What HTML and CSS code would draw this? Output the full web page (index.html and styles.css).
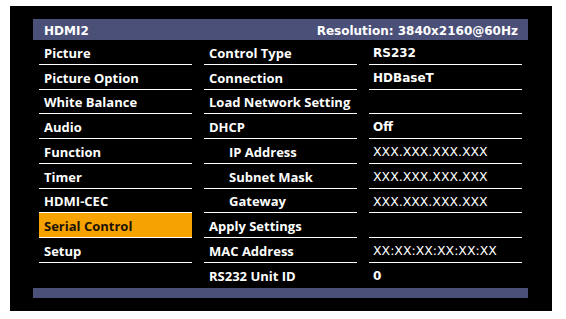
FILE: index.html
```html
<!DOCTYPE html>
<html lang="en">
<head>
    <meta charset="UTF-8">
    <meta name="viewport" content="width=device-width, initial-scale=1.0">
    <title>HDMI2 - Serial Control</title>
    <link rel="stylesheet" href="styles.css">
</head>
<body>
    <div class="screen">
        <div class="titlebar">
            <span>HDMI2</span>
            <span>Resolution: 3840x2160@60Hz</span>
        </div>

        <div class="menu">
            <div class="col">
                <div class="row">Picture</div>
                <div class="row">Picture Option</div>
                <div class="row">White Balance</div>
                <div class="row">Audio</div>
                <div class="row">Function</div>
                <div class="row">Timer</div>
                <div class="row">HDMI-CEC</div>
                <div class="row active">Serial Control</div>
                <div class="row">Setup</div>
            </div>

            <div class="col">
                <div class="row">Control Type</div>
                <div class="row">Connection</div>
                <div class="row">Load Network Setting</div>
                <div class="row">DHCP</div>
                <div class="row sub">IP Address</div>
                <div class="row sub">Subnet Mask</div>
                <div class="row sub">Gateway</div>
                <div class="row">Apply Settings</div>
                <div class="row">MAC Address</div>
                <div class="row last">RS232 Unit ID</div>
            </div>

            <div class="col values">
                <div class="row strong">RS232</div>
                <div class="row strong">HDBaseT</div>
                <div class="row"></div>
                <div class="row strong">Off</div>
                <div class="row">XXX.XXX.XXX.XXX</div>
                <div class="row">XXX.XXX.XXX.XXX</div>
                <div class="row">XXX.XXX.XXX.XXX</div>
                <div class="row"></div>
                <div class="row">XX:XX:XX:XX:XX:XX</div>
                <div class="row strong last">0</div>
            </div>
        </div>

        <div class="footer"></div>
    </div>
</body>
</html>
```

FILE: styles.css
```css
:root {
    --bar-color: #4b5078;
    --select-color: #f6a200;
}

* {
    margin: 0;
    padding: 0;
    box-sizing: border-box;
}

body {
    background: #ffffff;
    font-family: 'Open Sans', sans-serif;
    color: #ffffff;
}

.screen {
    width: 542px;
    height: 305px;
    margin: 6px 0 0 10px;
    padding: 13px 24px 0 23px;
    background: #000000;
}

.titlebar {
    height: 21px;
    padding: 2px 10px 0 11px;
    display: flex;
    align-items: center;
    justify-content: space-between;
    background: var(--bar-color);
    font-family: 'DejaVu Sans', sans-serif;
    font-weight: bold;
    font-size: 12px;
}

.menu {
    height: 248px;
    padding: 0 6px;
    display: grid;
    grid-template-columns: 153px 153px 153px;
    column-gap: 12px;
}

.col {
    display: flex;
    flex-direction: column;
}

.row {
    height: 24.75px;
    padding: 2px 0 0 5px;
    display: flex;
    align-items: center;
    border-bottom: 1px solid #ffffff;
    font-size: 13px;
    font-weight: 700;
    white-space: nowrap;
}

.row.sub {
    padding-left: 25px;
}

.row.last {
    border-bottom: none;
}

.row.active {
    background: var(--select-color);
    color: #1c1200;
}

.values .row {
    padding-left: 4px;
    font-family: 'DejaVu Sans', sans-serif;
    font-size: 12.5px;
    font-weight: normal;
}

.values .row.strong {
    font-size: 12px;
    font-weight: bold;
}

.footer {
    height: 10px;
    background: var(--bar-color);
}
```
